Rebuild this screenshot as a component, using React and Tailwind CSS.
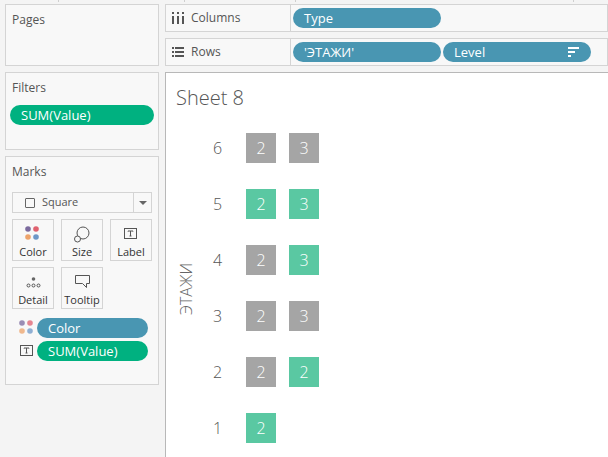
const BLUE = "bg-[#4996b2]";
const GREEN = "bg-[#00b180]";

const Pill = ({ color, className = "", children }) => (
  <div className={`flex h-5 items-center rounded-full pl-[11px] text-[13px] leading-none text-white ${color} ${className}`}>{children}</div>
);

const ColorDots = ({ muted }) => (
  <svg width="16" height="16" viewBox="0 0 16 16" className={muted ? "opacity-75" : ""}>
    <circle cx="3" cy="3" r="2.8" fill="#7b6a9e" />
    <circle cx="11" cy="3" r="2.8" fill="#e0616f" />
    <circle cx="3" cy="11" r="2.8" fill="#eda36b" />
    <circle cx="11" cy="11" r="2.8" fill="#6d97c7" />
  </svg>
);

const LabelIcon = () => (
  <svg width="14" height="12" viewBox="0 0 14 12" fill="none" stroke="#555">
    <rect x="0.5" y="0.5" width="12" height="10" />
    <path d="M4 3.5V3h5v.5M6.5 3v5M5.5 8h2" />
  </svg>
);

const SizeIcon = () => (
  <svg width="16" height="17" viewBox="0 0 16 17" fill="none" stroke="#555">
    <circle cx="9" cy="7" r="6" />
    <circle cx="3.5" cy="13" r="3" fill="#f8f8f8" />
  </svg>
);

const DetailIcon = () => (
  <svg width="15" height="11" viewBox="0 0 15 11" fill="none" stroke="#555">
    <circle cx="7.5" cy="2" r="1.8" fill="#666" stroke="none" />
    <circle cx="2.5" cy="8.5" r="1.5" />
    <circle cx="7.5" cy="8.5" r="1.5" />
    <circle cx="12.5" cy="8.5" r="1.5" />
  </svg>
);

const TooltipIcon = () => (
  <svg width="15" height="14" viewBox="0 0 15 14" fill="none" stroke="#555">
    <path d="M.5.5h14v8h-3v4l-4-4h-7z" />
  </svg>
);

const MarkButton = ({ icon, label }) => (
  <div className="flex h-[42px] w-[42px] flex-col items-center border border-[#d4d4d4] bg-[#f8f8f8]">
    <div className="flex h-[24px] items-center justify-center pt-1">{icon}</div>
    <span className="mt-[2px] text-[11px] leading-none whitespace-nowrap text-[#333]">{label}</span>
  </div>
);

const Card = ({ title, className = "", children }) => (
  <section className={`border border-[#d4d4d4] bg-[#f8f8f8] ${className}`}>
    <h2 className="pt-[7px] pl-[6px] text-[12px] leading-[16px] font-normal text-[#555]">{title}</h2>
    {children}
  </section>
);

const ShelfRow = ({ icon, label, children }) => (
  <div className="flex h-[28px] border border-[#d4d4d4] bg-[#f8f8f8]">
    <div className="flex w-[125px] items-center gap-[7px] border-r border-[#d4d4d4] pl-[6px] text-[12px] text-[#555]">
      {icon}
      <span>{label}</span>
    </div>
    <div className="flex items-center gap-[2px] pl-[2px]">{children}</div>
  </div>
);

const rows = [
  { level: 6, cells: [[2, "gray"], [3, "gray"]] },
  { level: 5, cells: [[2, "teal"], [3, "teal"]] },
  { level: 4, cells: [[2, "gray"], [3, "teal"]] },
  { level: 3, cells: [[2, "gray"], [3, "gray"]] },
  { level: 2, cells: [[2, "gray"], [2, "teal"]] },
  { level: 1, cells: [[2, "teal"]] },
];

export default function App() {
  return (
    <div className="flex h-[457px] w-[608px] flex-col overflow-hidden bg-[#f4f4f4] font-['Open_Sans',sans-serif]">
      {/* cut-off toolbar separators at the very top */}
      <div className="flex h-1 shrink-0 items-start">
        <span className="ml-[58px] h-[2px] w-px bg-[#cfcfcf]" />
        <span className="ml-[125px] h-[2px] w-px bg-[#cfcfcf]" />
        <span className="ml-[110px] h-[2px] w-px bg-[#cfcfcf]" />
        <span className="ml-[277px] h-[2px] w-px bg-[#cfcfcf]" />
      </div>
      <div className="flex min-h-0 flex-1 gap-[6px] pl-[5px]">
        <aside className="flex w-[154px] shrink-0 flex-col gap-[6px]">
          <Card title="Pages" className="h-[62px]" />
          <Card title="Filters" className="h-[78px]">
            <Pill color={GREEN} className="mx-1 mt-[9px]">SUM(Value)</Pill>
          </Card>
          <Card title="Marks" className="h-[229px]">
            <div className="mx-[6px] mt-[12px] flex h-[21px] items-center border border-[#d4d4d4] text-[11px] text-[#555]">
              <div className="flex flex-1 items-center gap-[7px] pl-3">
                <span className="h-[10px] w-[10px] rounded-[1px] border border-[#666]" />
                <span>Square</span>
              </div>
              <div className="flex h-full w-[18px] items-center justify-center border-l border-[#d4d4d4]">
                <span className="h-0 w-0 border-x-[4px] border-t-[4px] border-x-transparent border-t-[#666]" />
              </div>
            </div>
            <div className="mx-[6px] mt-[6px] grid w-[140px] grid-cols-3 gap-x-[7px] gap-y-[6px]">
              <MarkButton icon={<ColorDots />} label="Color" />
              <MarkButton icon={<SizeIcon />} label="Size" />
              <MarkButton icon={<LabelIcon />} label="Label" />
              <MarkButton icon={<DetailIcon />} label="Detail" />
              <MarkButton icon={<TooltipIcon />} label="Tooltip" />
            </div>
            <div className="mt-[9px] flex flex-col gap-[3px] pr-[10px] pl-[13px]">
              <div className="flex items-center gap-[2px]">
                <ColorDots muted />
                <Pill color={BLUE} className="flex-1">Color</Pill>
              </div>
              <div className="flex items-center gap-[2px]">
                <div className="flex w-4 justify-center"><LabelIcon /></div>
                <Pill color={GREEN} className="flex-1">SUM(Value)</Pill>
              </div>
            </div>
          </Card>
        </aside>

        <main className="flex min-w-0 flex-1 flex-col gap-[6px]">
          <ShelfRow
            label="Columns"
            icon={
              <svg width="12" height="12" viewBox="0 0 12 12" fill="#555">
                <path d="M0 4h2v8H0zM5 4h2v8H5zM10 4h2v8h-2zM0 0h2v2H0zM5 0h2v2H5zM10 0h2v2h-2z" />
              </svg>
            }
          >
            <Pill color={BLUE} className="w-[148px]">Type</Pill>
          </ShelfRow>
          <ShelfRow
            label="Rows"
            icon={
              <svg width="12" height="12" viewBox="0 0 12 12" fill="#555">
                <path d="M0 1h2v2H0zM0 5h2v2H0zM0 9h2v2H0zM3 1h9v2H3zM3 5h9v2H3zM3 9h9v2H3z" />
              </svg>
            }
          >
            <Pill color={BLUE} className="w-[148px]">'ЭТАЖИ'</Pill>
            <Pill color={BLUE} className="w-[148px] justify-between pr-[12px]">
              <span>Level</span>
              <svg width="11" height="10" viewBox="0 0 11 10" fill="#fff">
                <path d="M0 0h11v2H0zM0 4h7v2H0zM0 8h3v2H0z" />
              </svg>
            </Pill>
          </ShelfRow>

          <section className="min-h-0 flex-1 border-t border-l border-[#b8b8b8] bg-white pt-[13px] pl-[10px]">
            <h1 className="text-[20px] leading-[24px] font-light text-[#555]">Sheet 8</h1>
            <div className="mt-[23px] flex">
              <div className="flex h-[312px] w-[20px] items-center justify-center">
                <span className="rotate-180 text-[16px] leading-none font-light text-[#666] [writing-mode:vertical-rl]">ЭТАЖИ</span>
              </div>
              <div className="flex flex-col gap-[26px]">
                {rows.map((row) => (
                  <div className="flex h-[30px] items-center" key={row.level}>
                    <span className="w-[50px] pl-[17px] text-[16px] font-light text-[#555]">{row.level}</span>
                    <div className="flex gap-[13px]">
                      {row.cells.map(([value, tone], i) => (
                        <div
                          className={`flex h-[30px] w-[30px] items-center justify-center text-[16px] font-light text-white ${tone === "teal" ? "bg-[#5ac8a2]" : "bg-[#a5a5a5]"}`}
                          key={i}
                        >
                          {value}
                        </div>
                      ))}
                    </div>
                  </div>
                ))}
              </div>
            </div>
          </section>
        </main>
      </div>
    </div>
  );
}
